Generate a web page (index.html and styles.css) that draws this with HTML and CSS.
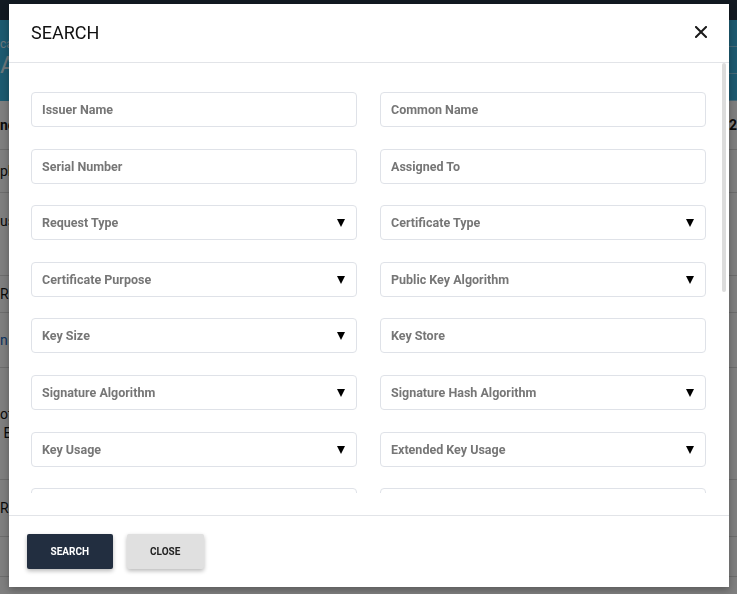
FILE: index.html
```html
<!DOCTYPE html>
<html lang="en">
<head>
<meta charset="utf-8">
<title>Search</title>
<link rel="stylesheet" href="styles.css">
</head>
<body>
<div class="page">
  <div class="nav"></div>
  <div class="banner">
    <div class="banner-text">
      <div class="crumb">cates</div>
      <div class="title">Applications</div>
    </div>
    <div class="tabs">
      <div class="tab"></div>
      <div class="tab"></div>
      <div class="tab"></div>
    </div>
  </div>
  <div class="table">
    <div class="row row-head"><span>ne</span><span class="end">s2</span></div>
    <div class="row row-a"><span>pl</span></div>
    <div class="row row-b"><span>us</span></div>
    <div class="row row-c"><span>Ro</span></div>
    <div class="row row-d"><span class="link">n</span></div>
    <div class="row row-e"><span>ot<br>&nbsp;E</span></div>
    <div class="row row-f"><span>R4</span></div>
    <div class="row row-g"></div>
  </div>
</div>

<div class="backdrop"></div>

<div class="modal" role="dialog" aria-label="Search">
  <div class="modal-header">
    <h2 class="modal-title">SEARCH</h2>
    <button class="close-x" aria-label="Close">
      <svg width="12" height="12" viewBox="0 0 12 12"><path d="M1 1 L11 11 M11 1 L1 11" stroke="#1a1a1a" stroke-width="2" stroke-linecap="square" fill="none"/></svg>
    </button>
  </div>
  <div class="modal-body">
    <div class="modal-scroll">
      <div class="form-grid">
        <div class="field"><span class="ph">Issuer Name</span></div>
        <div class="field"><span class="ph">Common Name</span></div>
        <div class="field"><span class="ph">Serial Number</span></div>
        <div class="field"><span class="ph">Assigned To</span></div>
        <div class="field"><span class="ph">Request Type</span><span class="caret"></span></div>
        <div class="field"><span class="ph">Certificate Type</span><span class="caret"></span></div>
        <div class="field"><span class="ph">Certificate Purpose</span><span class="caret"></span></div>
        <div class="field"><span class="ph">Public Key Algorithm</span><span class="caret"></span></div>
        <div class="field"><span class="ph">Key Size</span><span class="caret"></span></div>
        <div class="field"><span class="ph">Key Store</span></div>
        <div class="field"><span class="ph">Signature Algorithm</span><span class="caret"></span></div>
        <div class="field"><span class="ph">Signature Hash Algorithm</span><span class="caret"></span></div>
        <div class="field"><span class="ph">Key Usage</span><span class="caret"></span></div>
        <div class="field"><span class="ph">Extended Key Usage</span><span class="caret"></span></div>
        <div class="field"><span class="ph">Valid From</span></div>
        <div class="field"><span class="ph">Valid To</span></div>
        <div class="field"><span class="ph">Status</span><span class="caret"></span></div>
        <div class="field"><span class="ph">Revocation Reason</span><span class="caret"></span></div>
        <div class="field"><span class="ph">Issued From</span></div>
        <div class="field"><span class="ph">Issued To</span></div>
        <div class="field"><span class="ph">Expires From</span></div>
        <div class="field"><span class="ph">Expires To</span></div>
        <div class="field"><span class="ph">Requested By</span></div>
        <div class="field"><span class="ph">Approved By</span></div>
        <div class="field"><span class="ph">Organization</span></div>
        <div class="field"><span class="ph">Organizational Unit</span></div>
        <div class="field"><span class="ph">Country</span><span class="caret"></span></div>
        <div class="field"><span class="ph">State</span></div>
      </div>
    </div>
    <div class="scroll-thumb"></div>
  </div>
  <div class="modal-footer">
    <button class="btn btn-primary">SEARCH</button>
    <button class="btn btn-light">CLOSE</button>
  </div>
</div>
</body>
</html>
```
FILE: styles.css
```css
* { box-sizing: border-box; }

html, body {
  margin: 0;
  padding: 0;
  height: 100%;
  overflow: hidden;
}

body {
  font-family: Roboto, "Liberation Sans", Arial, sans-serif;
  background: #ffffff;
}

/* ---------- page behind the dialog ---------- */
.page {
  display: flex;
  flex-direction: column;
  height: 594px;
}

.nav {
  height: 20px;
  background: #243444;
}

.banner {
  height: 81px;
  background: #3ab4e0;
  display: flex;
  justify-content: space-between;
}

.banner-text {
  padding-top: 17px;
  color: #d8eef8;
}

.crumb {
  font-size: 12px;
  line-height: 14px;
}

.title {
  font-size: 24px;
  line-height: 28px;
}

.tabs {
  width: 60px;
  display: flex;
  flex-direction: column;
  padding-top: 26px;
}

.tab {
  height: 33px;
  border-top: 1px solid #8fd3ee;
}

.tab:last-child { height: 1px; }

.table {
  display: flex;
  flex-direction: column;
  font-size: 14px;
  color: #111;
}

.row {
  display: flex;
  align-items: center;
  justify-content: space-between;
  border-bottom: 1px solid #dadada;
  white-space: nowrap;
}

.row-head { height: 49px; font-weight: 700; }
.row-a { height: 43px; }
.row-b { height: 83px; align-items: flex-start; padding-top: 20px; }
.row-c { height: 37px; }
.row-d { height: 55px; }
.row-e { height: 112px; line-height: 19px; }
.row-f { height: 57px; }
.row-g { height: 40px; }

.link { color: #1565c0; }

.backdrop {
  position: fixed;
  inset: 0;
  background: rgba(0, 0, 0, 0.5);
}

/* ---------- dialog ---------- */
.modal {
  position: fixed;
  top: 4px;
  left: 9px;
  width: 720px;
  height: 583px;
  background: #fff;
  display: flex;
  flex-direction: column;
  box-shadow: 0 3px 8px rgba(0, 0, 0, 0.3);
}

.modal-header {
  height: 59px;
  flex: none;
  display: flex;
  align-items: center;
  justify-content: space-between;
  padding: 0 22px;
  border-bottom: 1px solid #e2e4e8;
}

.modal-title {
  margin: 0;
  font-size: 18px;
  font-weight: 400;
  color: #111;
  margin-top: -2px;
}

.close-x {
  border: 0;
  background: none;
  padding: 0;
  width: 12px;
  height: 12px;
  display: flex;
  margin-top: -3px;
}

.modal-body {
  position: relative;
  flex: 1;
  display: flex;
  flex-direction: column;
  padding-bottom: 22px;
  min-height: 0;
}

.modal-scroll {
  flex: 1;
  overflow-y: auto;
  scrollbar-width: none;
  padding: 29px 23px 7px 22px;
}

.scroll-thumb {
  position: absolute;
  top: 0;
  right: 3px;
  width: 4px;
  height: 229px;
  background: #dcdcdc;
  border-radius: 2px;
}

.form-grid {
  display: grid;
  grid-template-columns: 1fr 1fr;
  column-gap: 23px;
  row-gap: 21.6px;
}

.field {
  height: 35px;
  border: 1px solid #dfe2e8;
  border-radius: 4px;
  display: flex;
  align-items: center;
  justify-content: space-between;
  padding: 0 11px 0 10px;
}

.ph {
  font-size: 12.5px;
  font-weight: 700;
  color: #767676;
}

.caret {
  width: 0;
  height: 0;
  border-left: 4.5px solid transparent;
  border-right: 4.5px solid transparent;
  border-top: 8px solid #000;
  margin-top: 1px;
}

.modal-footer {
  flex: none;
  height: 72px;
  border-top: 1px solid #e2e4e8;
  display: flex;
  align-items: center;
  gap: 14px;
  padding: 0 18px;
}

.btn {
  height: 35px;
  padding: 0 23.5px;
  border: 0;
  border-radius: 2px;
  font-family: Roboto, "Liberation Sans", Arial, sans-serif;
  font-size: 10px;
  font-weight: 700;
  box-shadow: 0 2px 4px rgba(0, 0, 0, 0.28);
}

.btn-primary {
  background: #222e40;
  color: #fff;
}

.btn-light {
  background: #e0e0e0;
  color: #222;
}
```
